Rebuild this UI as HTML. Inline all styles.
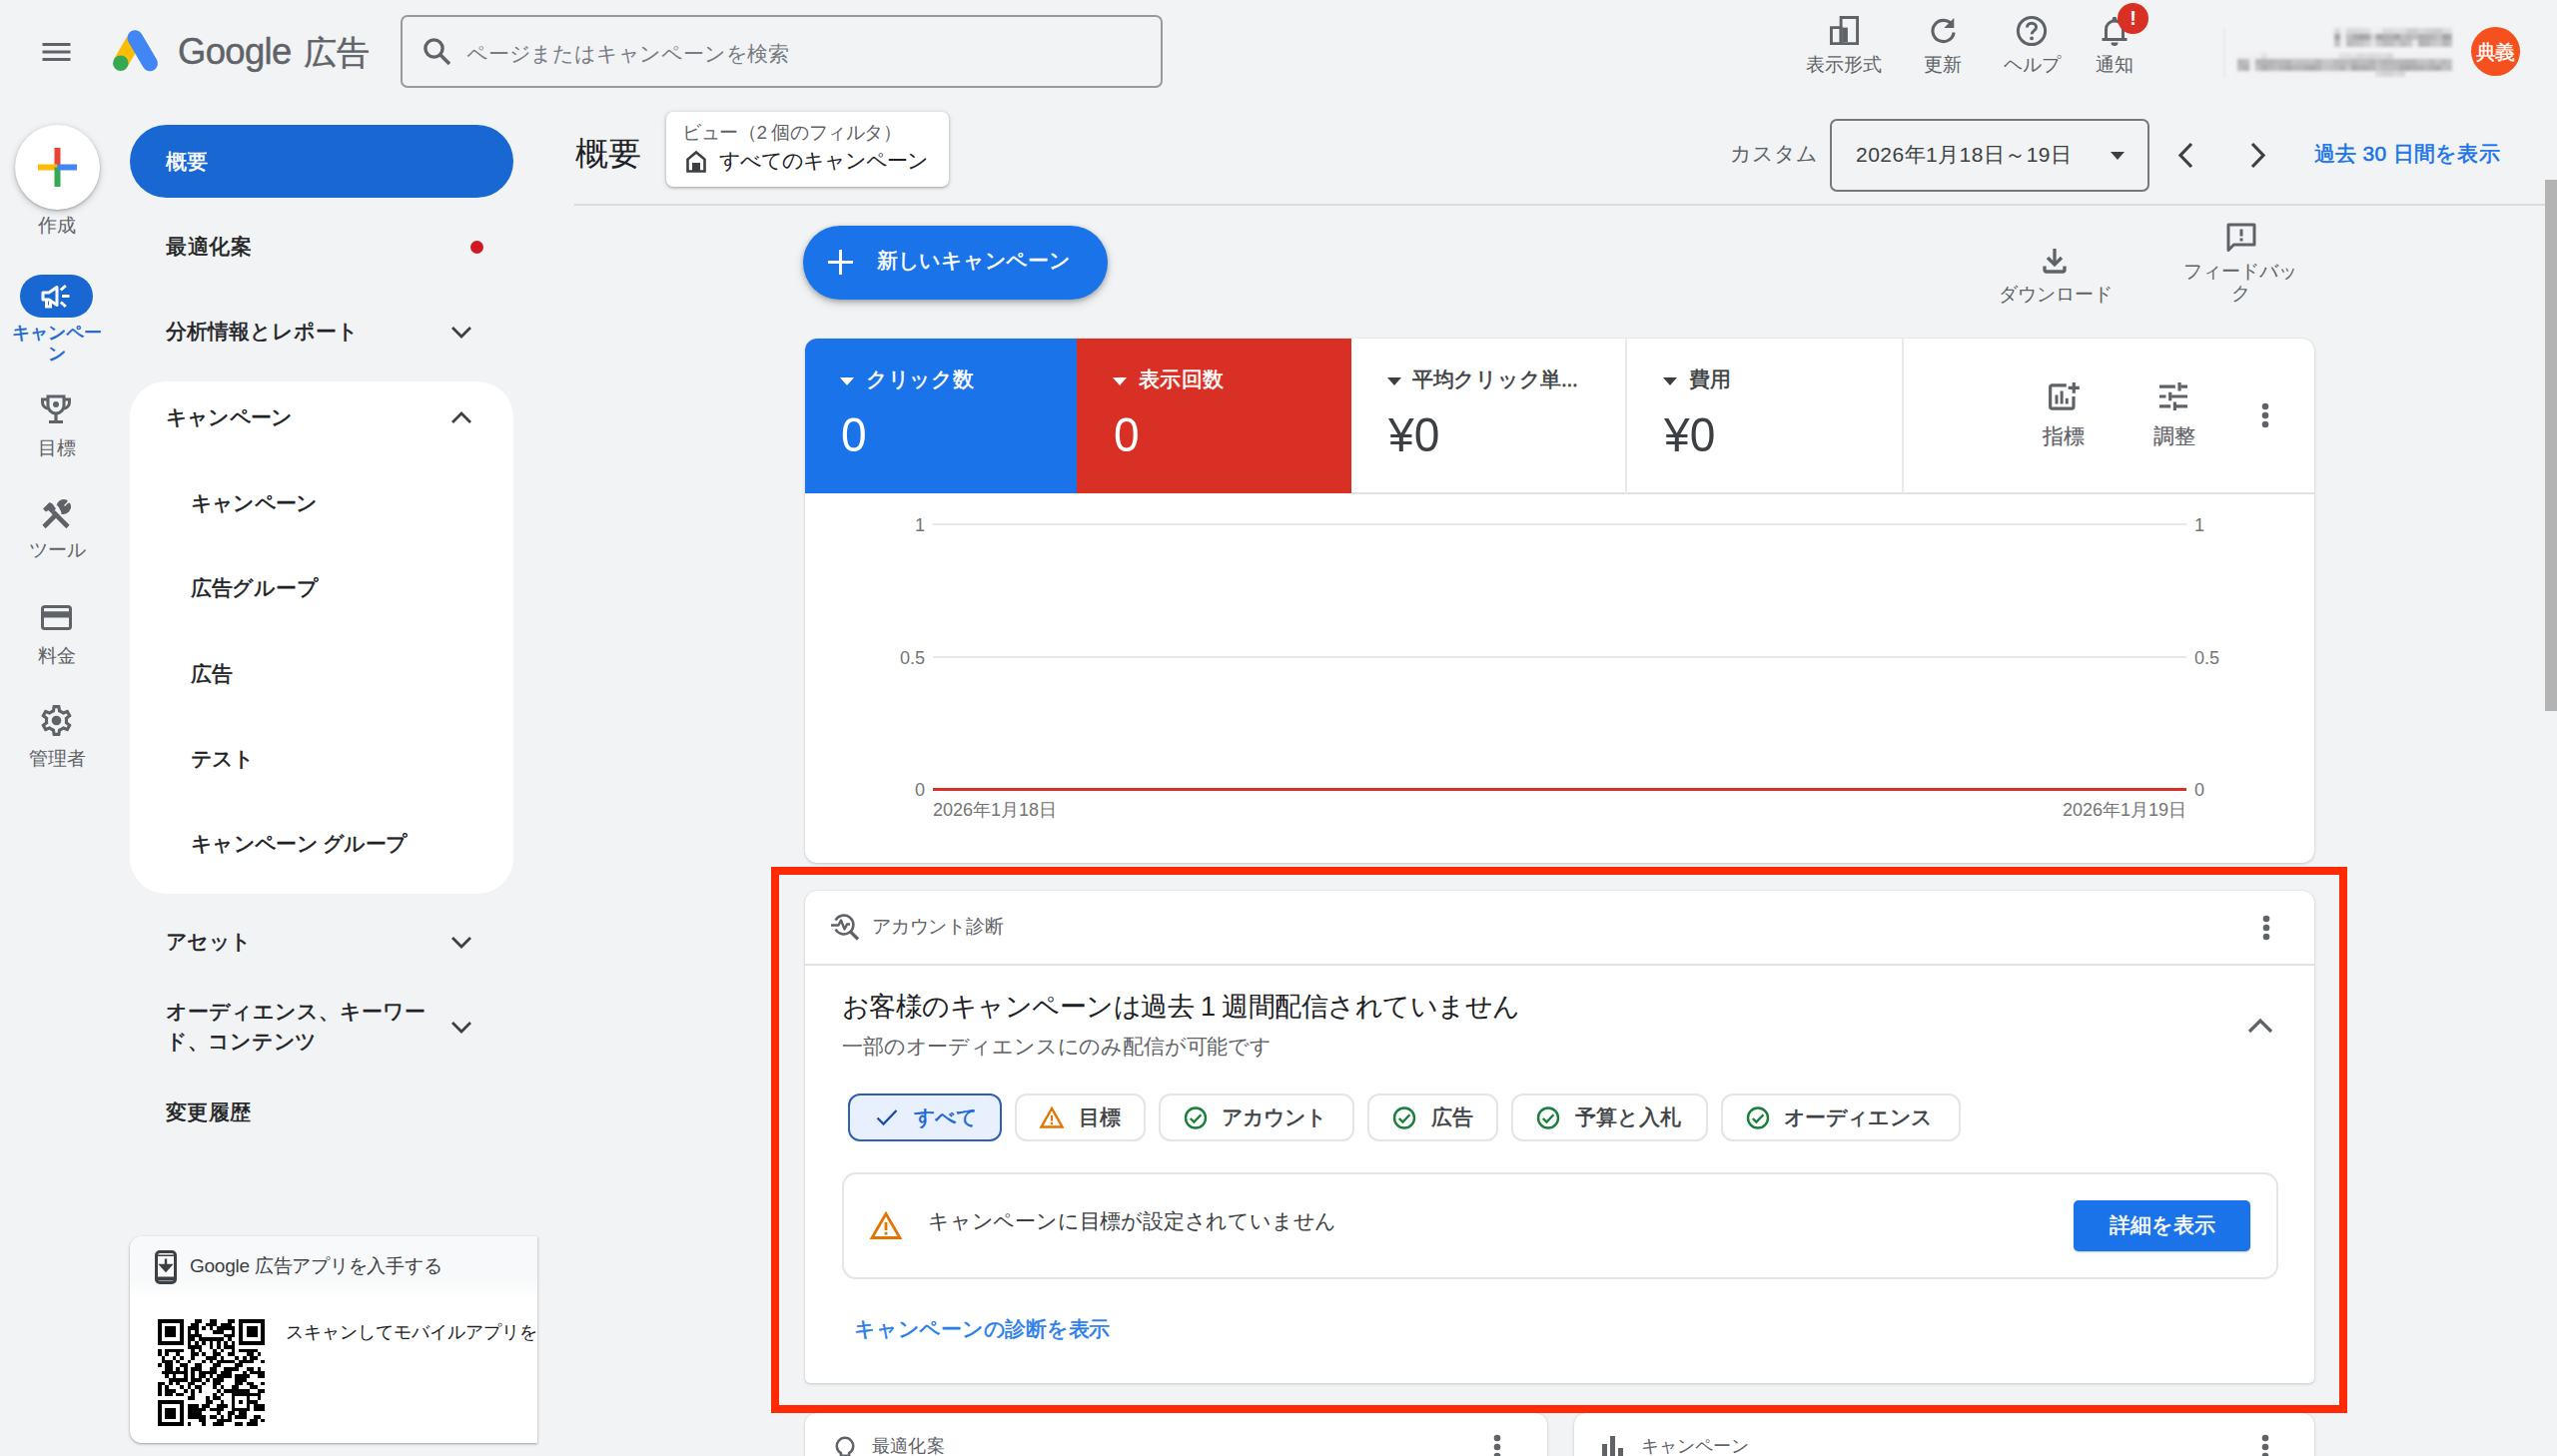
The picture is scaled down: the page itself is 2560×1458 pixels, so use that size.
<!DOCTYPE html>
<html lang="ja">
<head>
<meta charset="utf-8">
<title>Google 広告 - 概要</title>
<style>
*{box-sizing:border-box;margin:0;padding:0}
html,body{width:2560px;height:1458px;overflow:hidden;background:#f1f3f4}
body{font-family:"Liberation Sans",sans-serif;color:#202124;position:relative}
#app{position:absolute;left:0;top:0;width:2560px;height:1458px;overflow:hidden;background:#f1f3f4}
.a{position:absolute}
.t{position:absolute;white-space:nowrap;line-height:30px;height:30px;font-size:21px;color:#202124}
.c{text-align:center}
.g{color:#5f6368}
.s18{font-size:19px;line-height:26px;height:26px}
.b{font-weight:bold}
.m{-webkit-text-stroke:0.55px currentColor}
svg{position:absolute;overflow:visible}
.card{position:absolute;background:#fff;border-radius:12px;box-shadow:0 1px 3px rgba(60,64,67,.22),0 0 1px rgba(60,64,67,.2)}
.chip{position:absolute;top:1095px;height:48px;border:2px solid #e3e5e8;border-radius:12px;background:#fff}
.chip .t{top:7px;color:#3c4043}
.chip svg{position:absolute}
</style>
</head>
<body>
<div id="app">

<!-- ================= HEADER ================= -->
<svg class="a" style="left:42px;top:42px" width="30" height="22" viewBox="0 0 30 22"><path d="M0.500 2.500h28M0.500 10h28M0.500 17.500h28" stroke="#5f6368" stroke-width="3" fill="none"/></svg>

<!-- Google Ads logo -->
<svg class="a" style="left:111px;top:28px" width="50" height="46" viewBox="0 0 50 46">
  <path d="M9.800 35.200 22.500 13" stroke="#fbbc04" stroke-width="15.500" stroke-linecap="butt" fill="none"/>
  <path d="M24.200 10 39.200 35.500" stroke="#4285f4" stroke-width="15.500" stroke-linecap="round" fill="none"/>
  <circle cx="9.800" cy="35.200" r="7.750" fill="#34a853"/>
</svg>
<div class="t" style="left:178px;top:29px;font-size:36.400px;line-height:46px;height:46px;color:#5f6368;letter-spacing:-0.600px;-webkit-text-stroke:0.450px #5f6368">Google <span style="font-size:33px;letter-spacing:0;margin-left:3px">広告</span></div>

<!-- search -->
<div class="a" style="left:401px;top:15px;width:763px;height:73px;border:2px solid #969ba0;border-radius:7px;background:#f1f3f4"></div>
<svg class="a" style="left:423px;top:37px" width="30" height="30" viewBox="0 0 30 30"><circle cx="11.5" cy="11.5" r="8.6" stroke="#5f6368" stroke-width="3.4" fill="none"/><path d="M18 18l9 9" stroke="#5f6368" stroke-width="3.6" stroke-linecap="butt"/></svg>
<div class="t g" style="left:467px;top:39px;color:#787d83;letter-spacing:-0.200px">ページまたはキャンペーンを検索</div>

<!-- header right icons -->
<svg class="a" style="left:1831px;top:15px" width="31" height="31" viewBox="0 0 30 32"><path d="M11.5 2.5h17v27h-17z" stroke="#5f6368" stroke-width="3" fill="none"/><path d="M1.5 13h10v16.5h-10z" stroke="#5f6368" stroke-width="3" fill="none"/><path d="M13 13h5.5v15H13z" fill="#5f6368"/></svg>
<div class="t g s18 c" style="left:1786px;top:52px;width:120px">表示形式</div>

<svg class="a" style="left:1931px;top:16px" width="29" height="29" viewBox="0 0 30 30"><path d="M24.2 9.3A11 11 0 1 0 26 17" stroke="#5f6368" stroke-width="3.2" fill="none"/><path d="M26.2 2v10.4H15.8z" fill="#5f6368"/></svg>
<div class="t g s18 c" style="left:1885px;top:52px;width:120px">更新</div>

<svg class="a" style="left:2018px;top:15px" width="32" height="32" viewBox="0 0 32 32"><circle cx="16" cy="16" r="13.6" stroke="#5f6368" stroke-width="3" fill="none"/><path d="M11.4 12.6c0-2.6 2-4.4 4.6-4.4s4.6 1.7 4.6 4.1c0 3.2-4.4 3.6-4.4 7" stroke="#5f6368" stroke-width="2.9" fill="none"/><circle cx="16.1" cy="23.4" r="1.9" fill="#5f6368"/></svg>
<div class="t g s18 c" style="left:1974px;top:52px;width:120px">ヘルプ</div>

<svg class="a" style="left:2102px;top:15px" width="30" height="32" viewBox="0 0 30 32"><path d="M2.500 24.500h25M6.500 24v-9.500c0-4.800 3.500-8.500 8.500-8.500s8.500 3.700 8.500 8.500V24" stroke="#5f6368" stroke-width="3" fill="none" stroke-linejoin="round"/><circle cx="15" cy="4.200" r="2.400" fill="#5f6368"/><path d="M11.500 27.500h7a3.500 3.500 0 0 1-7 0z" fill="#5f6368"/></svg>
<div class="a" style="left:2120px;top:3px;width:31px;height:31px;border-radius:50%;background:#d93025;color:#fff;font-weight:bold;font-size:20px;line-height:31px;text-align:center">!</div>
<div class="t g s18 c" style="left:2057px;top:52px;width:120px">通知</div>

<!-- blurred account -->
<div class="a" style="left:2225px;top:28px;width:4px;height:50px;background:#eceef0"></div>
<div class="a" style="left:2337px;top:28px;width:118px;height:18px;filter:blur(1.800px)">
<div class="a" style="left:0;top:0px;width:118px;height:6.500px;background:linear-gradient(90deg,rgb(216,216,219) 0px 6px,rgb(238,238,241) 6px 12px,rgb(216,216,219) 12px 18px,rgb(216,216,219) 18px 24px,rgb(218,218,221) 24px 30px,rgb(220,220,223) 30px 36px,rgb(238,238,241) 36px 42px,rgb(238,238,241) 42px 48px,rgb(218,218,221) 48px 54px,rgb(217,217,220) 54px 60px,rgb(222,222,225) 60px 66px,rgb(221,221,224) 66px 72px,rgb(207,207,210) 72px 78px,rgb(205,205,208) 78px 84px,rgb(216,216,219) 84px 90px,rgb(211,211,214) 90px 96px,rgb(206,206,209) 96px 102px,rgb(204,204,207) 102px 108px,rgb(219,219,222) 108px 114px,rgb(222,222,225) 114px 120px)"></div>
<div class="a" style="left:0;top:6px;width:118px;height:6.500px;background:linear-gradient(90deg,rgb(166,166,169) 0px 6px,rgb(234,234,237) 6px 12px,rgb(192,192,195) 12px 18px,rgb(174,174,177) 18px 24px,rgb(164,164,167) 24px 30px,rgb(168,168,171) 30px 36px,rgb(212,212,215) 36px 42px,rgb(166,166,169) 42px 48px,rgb(176,176,179) 48px 54px,rgb(179,179,182) 54px 60px,rgb(165,165,168) 60px 66px,rgb(193,193,196) 66px 72px,rgb(184,184,187) 72px 78px,rgb(192,192,195) 78px 84px,rgb(176,176,179) 84px 90px,rgb(178,178,181) 90px 96px,rgb(182,182,185) 96px 102px,rgb(195,195,198) 102px 108px,rgb(164,164,167) 108px 114px,rgb(169,169,172) 114px 120px)"></div>
<div class="a" style="left:0;top:12px;width:118px;height:6.500px;background:linear-gradient(90deg,rgb(194,194,197) 0px 6px,rgb(238,238,241) 6px 12px,rgb(188,188,191) 12px 18px,rgb(193,193,196) 18px 24px,rgb(197,197,200) 24px 30px,rgb(206,206,209) 30px 36px,rgb(227,227,230) 36px 42px,rgb(202,202,205) 42px 48px,rgb(188,188,191) 48px 54px,rgb(190,190,193) 54px 60px,rgb(204,204,207) 60px 66px,rgb(187,187,190) 66px 72px,rgb(196,196,199) 72px 78px,rgb(234,234,237) 78px 84px,rgb(180,180,183) 84px 90px,rgb(182,182,185) 90px 96px,rgb(198,198,201) 96px 102px,rgb(204,204,207) 102px 108px,rgb(183,183,186) 108px 114px,rgb(192,192,195) 114px 120px)"></div>
</div>
<div class="a" style="left:2240px;top:53px;width:215px;height:24px;filter:blur(1.800px)">
<div class="a" style="left:0;top:0;width:215px;height:6.500px;background:linear-gradient(90deg,rgb(240,240,243) 0px 6px,rgb(240,240,243) 6px 12px,rgb(240,240,243) 12px 18px,rgb(240,240,243) 18px 24px,rgb(224,224,227) 24px 30px,rgb(240,240,243) 30px 36px,rgb(240,240,243) 36px 42px,rgb(240,240,243) 42px 48px,rgb(240,240,243) 48px 54px,rgb(240,240,243) 54px 60px,rgb(240,240,243) 60px 66px,rgb(240,240,243) 66px 72px,rgb(240,240,243) 72px 78px,rgb(240,240,243) 78px 84px,rgb(240,240,243) 84px 90px,rgb(240,240,243) 90px 96px,rgb(240,240,243) 96px 102px,rgb(224,224,227) 102px 108px,rgb(223,223,226) 108px 114px,rgb(226,226,229) 114px 120px,rgb(216,216,219) 120px 126px,rgb(220,220,223) 126px 132px,rgb(216,216,219) 132px 138px,rgb(220,220,223) 138px 144px,rgb(221,221,224) 144px 150px,rgb(214,214,217) 150px 156px,rgb(240,240,243) 156px 162px,rgb(240,240,243) 162px 168px,rgb(240,240,243) 168px 174px,rgb(240,240,243) 174px 180px,rgb(240,240,243) 180px 186px,rgb(240,240,243) 186px 192px,rgb(240,240,243) 192px 198px,rgb(240,240,243) 198px 204px,rgb(240,240,243) 204px 210px,rgb(240,240,243) 210px 216px)"></div>
<div class="a" style="left:0;top:6px;width:215px;height:6.500px;background:linear-gradient(90deg,rgb(183,183,186) 0px 6px,rgb(189,189,192) 6px 12px,rgb(237,237,240) 12px 18px,rgb(182,182,185) 18px 24px,rgb(180,180,183) 24px 30px,rgb(180,180,183) 30px 36px,rgb(186,186,189) 36px 42px,rgb(186,186,189) 42px 48px,rgb(181,181,184) 48px 54px,rgb(195,195,198) 54px 60px,rgb(192,192,195) 60px 66px,rgb(192,192,195) 66px 72px,rgb(193,193,196) 72px 78px,rgb(182,182,185) 78px 84px,rgb(198,198,201) 84px 90px,rgb(200,200,203) 90px 96px,rgb(186,186,189) 96px 102px,rgb(188,188,191) 102px 108px,rgb(190,190,193) 108px 114px,rgb(182,182,185) 114px 120px,rgb(189,189,192) 120px 126px,rgb(190,190,193) 126px 132px,rgb(180,180,183) 132px 138px,rgb(193,193,196) 138px 144px,rgb(183,183,186) 144px 150px,rgb(184,184,187) 150px 156px,rgb(187,187,190) 156px 162px,rgb(183,183,186) 162px 168px,rgb(180,180,183) 168px 174px,rgb(181,181,184) 174px 180px,rgb(194,194,197) 180px 186px,rgb(195,195,198) 186px 192px,rgb(185,185,188) 192px 198px,rgb(197,197,200) 198px 204px,rgb(186,186,189) 204px 210px,rgb(194,194,197) 210px 216px)"></div>
<div class="a" style="left:0;top:12px;width:215px;height:6.500px;background:linear-gradient(90deg,rgb(186,186,189) 0px 6px,rgb(176,176,179) 6px 12px,rgb(238,238,241) 12px 18px,rgb(194,194,197) 18px 24px,rgb(174,174,177) 24px 30px,rgb(183,183,186) 30px 36px,rgb(190,190,193) 36px 42px,rgb(182,182,185) 42px 48px,rgb(173,173,176) 48px 54px,rgb(182,182,185) 54px 60px,rgb(183,183,186) 60px 66px,rgb(176,176,179) 66px 72px,rgb(170,170,173) 72px 78px,rgb(178,178,181) 78px 84px,rgb(197,197,200) 84px 90px,rgb(195,195,198) 90px 96px,rgb(188,188,191) 96px 102px,rgb(179,179,182) 102px 108px,rgb(198,198,201) 108px 114px,rgb(170,170,173) 114px 120px,rgb(176,176,179) 120px 126px,rgb(175,175,178) 126px 132px,rgb(182,182,185) 132px 138px,rgb(197,197,200) 138px 144px,rgb(189,189,192) 144px 150px,rgb(190,190,193) 150px 156px,rgb(188,188,191) 156px 162px,rgb(173,173,176) 162px 168px,rgb(171,171,174) 168px 174px,rgb(174,174,177) 174px 180px,rgb(176,176,179) 180px 186px,rgb(184,184,187) 186px 192px,rgb(178,178,181) 192px 198px,rgb(170,170,173) 198px 204px,rgb(194,194,197) 204px 210px,rgb(189,189,192) 210px 216px)"></div>
<div class="a" style="left:0;top:18px;width:215px;height:6px;background:linear-gradient(90deg,rgb(241,241,244) 0px 6px,rgb(241,241,244) 6px 12px,rgb(241,241,244) 12px 18px,rgb(241,241,244) 18px 24px,rgb(241,241,244) 24px 30px,rgb(241,241,244) 30px 36px,rgb(241,241,244) 36px 42px,rgb(241,241,244) 42px 48px,rgb(241,241,244) 48px 54px,rgb(241,241,244) 54px 60px,rgb(241,241,244) 60px 66px,rgb(241,241,244) 66px 72px,rgb(241,241,244) 72px 78px,rgb(241,241,244) 78px 84px,rgb(241,241,244) 84px 90px,rgb(241,241,244) 90px 96px,rgb(241,241,244) 96px 102px,rgb(241,241,244) 102px 108px,rgb(241,241,244) 108px 114px,rgb(241,241,244) 114px 120px,rgb(241,241,244) 120px 126px,rgb(241,241,244) 126px 132px,rgb(241,241,244) 132px 138px,rgb(219,219,222) 138px 144px,rgb(211,211,214) 144px 150px,rgb(211,211,214) 150px 156px,rgb(219,219,222) 156px 162px,rgb(214,214,217) 162px 168px,rgb(241,241,244) 168px 174px,rgb(241,241,244) 174px 180px,rgb(241,241,244) 180px 186px,rgb(241,241,244) 186px 192px,rgb(241,241,244) 192px 198px,rgb(241,241,244) 198px 204px,rgb(241,241,244) 204px 210px,rgb(241,241,244) 210px 216px)"></div>
</div>
<div class="a" style="left:2474px;top:27px;width:49px;height:49px;border-radius:50%;background:#f4511e;color:#fff;font-size:19.500px;line-height:51px;text-align:center;-webkit-text-stroke:0.300px #fff;letter-spacing:-0.300px">典義</div>

<!-- ================= LEFT RAIL ================= -->
<div class="a" style="left:15px;top:125px;width:85px;height:85px;border-radius:50%;background:#fff;box-shadow:0 2px 6px rgba(60,64,67,.3),0 1px 2px rgba(60,64,67,.25)"></div>
<svg class="a" style="left:38px;top:148px" width="39" height="39" viewBox="0 0 39 39"><path d="M16.500 0h6v19.500h-6z" fill="#ea4335"/><path d="M0 16.500h19.500v6H0z" fill="#fbbc04"/><path d="M16.500 19.500h6V39h-6z" fill="#34a853"/><path d="M19.500 16.500H39v6H19.500z" fill="#4285f4"/></svg>
<div class="t g s18 c" style="left:0;top:213px;width:114px">作成</div>

<div class="a" style="left:20px;top:275px;width:73px;height:43px;border-radius:22px;background:#1967d2"></div>
<svg class="a" style="left:41px;top:283px" width="32" height="28" viewBox="0 0 32 28"><path d="M2 10h6l8-5.500v18L8 17H2z" stroke="#fff" stroke-width="3" fill="none" stroke-linejoin="round"/><path d="M5.500 17.500v6.500h4v-6" stroke="#fff" stroke-width="3" fill="none"/><path d="M21 13.500h7.500M19.800 7.500l5-4.500M19.800 19.500l5 4.500" stroke="#fff" stroke-width="3" fill="none"/></svg>
<div class="t s18 c m" style="left:0;top:323px;width:114px;color:#1967d2;line-height:21px;height:42px;white-space:normal;padding:0 9px;font-size:18px">キャンペーン</div>

<svg class="a" style="left:40px;top:394px" width="32" height="32" viewBox="0 0 32 32"><path d="M8 3h16v9a8 8 0 0 1-16 0z" stroke="#5f6368" stroke-width="3" fill="none"/><path d="M8 6H2.500v3a6 6 0 0 0 6 6M24 6h5.500v3a6 6 0 0 1-6 6" stroke="#5f6368" stroke-width="3" fill="none"/><path d="M16 20v7M9 28.500h14" stroke="#5f6368" stroke-width="3.200" fill="none"/><circle cx="16" cy="11" r="3" fill="#5f6368"/></svg>
<div class="t g s18 c" style="left:0;top:436px;width:114px">目標</div>

<svg class="a" style="left:40px;top:500px" width="32" height="32" viewBox="0 0 32 32"><path d="M4 27.500 17.500 14" stroke="#5f6368" stroke-width="4.600" fill="none"/><path d="M18 6.500a6 6 0 0 1 8-4.500l-4 4 3 3 4-4a6 6 0 0 1-7.500 8" stroke="#5f6368" stroke-width="3" fill="#5f6368" stroke-linejoin="round"/><path d="M28 27.500 13 12.500" stroke="#5f6368" stroke-width="4.600" fill="none"/><path d="M3 9.500l6.500-6.500 3 1.500 3.500 5-4.500 4.500-3-3-2.500 1.500z" fill="#5f6368"/></svg>
<div class="t g s18 c" style="left:0;top:538px;width:114px">ツール</div>

<svg class="a" style="left:41px;top:606px" width="31" height="25" viewBox="0 0 31 26" preserveAspectRatio="none"><rect x="1.500" y="1.500" width="28" height="23" rx="2.500" stroke="#5f6368" stroke-width="3" fill="none"/><path d="M1.500 6.500h28v6.500h-28z" fill="#5f6368"/></svg>
<div class="t g s18 c" style="left:0;top:644px;width:114px">料金</div>

<svg class="a" style="left:38px;top:703px" width="37" height="37" viewBox="0 0 24 24"><path d="M19.430 12.980c.040-.320.070-.640.070-.980s-.030-.660-.070-.980l2.110-1.650c.190-.150.240-.420.120-.640l-2-3.460c-.120-.220-.390-.300-.610-.220l-2.490 1c-.520-.400-1.080-.730-1.690-.980l-.380-2.650C14.460 2.180 14.250 2 14 2h-4c-.250 0-.460.180-.490.420l-.380 2.650c-.610.250-1.170.590-1.690.980l-2.490-1c-.230-.090-.490 0-.610.220l-2 3.460c-.130.220-.070.490.12.640l2.110 1.650c-.040.320-.070.650-.070.980s.030.660.070.980l-2.110 1.650c-.190.150-.240.420-.120.640l2 3.460c.120.220.390.300.610.220l2.490-1c.520.400 1.080.730 1.690.980l.380 2.650c.030.240.240.420.490.420h4c.250 0 .460-.180.490-.420l.380-2.650c.610-.250 1.170-.590 1.690-.980l2.490 1c.230.090.490 0 .610-.220l2-3.460c.120-.220.070-.490-.12-.640l-2.110-1.650zM17.450 11.270c.040.310.050.520.050.730 0 .210-.020.430-.050.730l-.140 1.130.89.700 1.080.840-.700 1.210-1.270-.510-1.040-.420-.900.680c-.430.320-.840.560-1.250.730l-1.060.430-.160 1.130-.200 1.350h-1.400l-.190-1.350-.160-1.130-1.060-.430c-.430-.180-.830-.410-1.230-.710l-.910-.700-1.060.430-1.270.510-.700-1.210 1.080-.840.890-.700-.140-1.130c-.030-.310-.050-.540-.050-.740s.020-.430.050-.730l.140-1.130-.890-.700-1.080-.840.700-1.210 1.270.510 1.040.420.900-.680c.430-.320.840-.560 1.250-.730l1.060-.430.160-1.130.200-1.350h1.390l.19 1.350.16 1.130 1.060.430c.430.180.830.410 1.230.710l.910.700 1.060-.430 1.270-.510.700 1.210-1.070.850-.89.700.14 1.130z" fill="#5f6368"/><circle cx="12" cy="12" r="3.100" fill="#5f6368"/></svg>
<div class="t g s18 c" style="left:0;top:747px;width:114px">管理者</div>

<!-- ================= SECOND NAV ================= -->
<div class="a" style="left:130px;top:125px;width:384px;height:73px;border-radius:37px;background:#1967d2"></div>
<div class="t m" style="left:166px;top:147px;color:#fff">概要</div>

<div class="t m" style="left:166px;top:232px;letter-spacing:0.700px">最適化案</div>
<div class="a" style="left:471px;top:241px;width:13px;height:13px;border-radius:50%;background:#d01820"></div>

<div class="t m" style="left:166px;top:317px">分析情報とレポート</div>
<svg class="a" style="left:451px;top:326px" width="22" height="14" viewBox="0 0 22 14"><path d="M2 2l9 9 9-9" stroke="#3c4043" stroke-width="2.800" fill="none"/></svg>

<div class="a" style="left:130px;top:382px;width:384px;height:513px;border-radius:36px;background:#fff"></div>
<div class="t m" style="left:166px;top:403px;letter-spacing:-0.800px">キャンペーン</div>
<svg class="a" style="left:451px;top:411px" width="22" height="14" viewBox="0 0 22 14"><path d="M2 12l9-9 9 9" stroke="#3c4043" stroke-width="2.800" fill="none"/></svg>
<div class="t m" style="left:191px;top:489px;letter-spacing:-0.800px">キャンペーン</div>
<div class="t m" style="left:191px;top:574px;letter-spacing:-0.300px">広告グループ</div>
<div class="t m" style="left:191px;top:660px">広告</div>
<div class="t m" style="left:191px;top:745px;letter-spacing:-1.200px">テスト</div>
<div class="t m" style="left:191px;top:830px;letter-spacing:-0.670px">キャンペーン グループ</div>

<div class="t m" style="left:166px;top:928px;letter-spacing:-0.600px">アセット</div>
<svg class="a" style="left:451px;top:937px" width="22" height="14" viewBox="0 0 22 14"><path d="M2 2l9 9 9-9" stroke="#3c4043" stroke-width="2.800" fill="none"/></svg>
<div class="t m" style="left:166px;top:998px">オーディエンス、キーワー</div>
<div class="t m" style="left:166px;top:1028px;letter-spacing:-0.300px">ド、コンテンツ</div>
<svg class="a" style="left:451px;top:1022px" width="22" height="14" viewBox="0 0 22 14"><path d="M2 2l9 9 9-9" stroke="#3c4043" stroke-width="2.800" fill="none"/></svg>
<div class="t m" style="left:166px;top:1099px;letter-spacing:0.300px">変更履歴</div>

<!-- app promo card -->
<div class="a" style="left:130px;top:1238px;width:408px;height:207px;overflow:hidden;border-radius:12px 0 0 12px;background:#fff;box-shadow:0 1px 3px rgba(60,64,67,.3),0 1px 2px rgba(60,64,67,.2)">
  <div class="a" style="left:0;top:0;width:409px;height:62px;background:linear-gradient(#f8f9fa 70%,#fff)"></div>
</div>
<svg class="a" style="left:155px;top:1252px" width="22" height="34" viewBox="0 0 22 34"><rect x="1.500" y="1.500" width="19" height="31" rx="3.500" stroke="#3c4043" stroke-width="3" fill="none"/><path d="M1.500 4.500h19v1.500h-19zM1.500 26.500h19v4h-19z" fill="#3c4043"/><path d="M11 8.500v11M6 15l5 5.500 5-5.500z" stroke="#3c4043" stroke-width="2.400" fill="#3c4043"/></svg>
<div class="t s18" style="left:190px;top:1255px;color:#3c4043;font-size:19px;letter-spacing:-0.250px">Google 広告アプリを入手する</div>
<div class="t s18" style="left:286px;top:1321px;color:#202124;width:252px;overflow:hidden;font-size:18px">スキャンしてモバイルアプリを</div>
<svg class="a" style="left:157.500px;top:1320.500px" width="107" height="107" viewBox="0 0 29 29" shape-rendering="crispEdges"><path d="M0 0h7v1h-7zM10 0h2v1h-2zM14 0h2v1h-2zM19 0h2v1h-2zM22 0h7v1h-7zM0 1h1v1h-1zM6 1h1v1h-1zM9 1h2v1h-2zM13 1h3v1h-3zM17 1h3v1h-3zM22 1h1v1h-1zM28 1h1v1h-1zM0 2h1v1h-1zM2 2h3v1h-3zM6 2h1v1h-1zM8 2h3v1h-3zM12 2h1v1h-1zM14 2h1v1h-1zM16 2h5v1h-5zM22 2h1v1h-1zM24 2h3v1h-3zM28 2h1v1h-1zM0 3h1v1h-1zM2 3h3v1h-3zM6 3h1v1h-1zM8 3h1v1h-1zM10 3h1v1h-1zM15 3h3v1h-3zM20 3h1v1h-1zM22 3h1v1h-1zM24 3h3v1h-3zM28 3h1v1h-1zM0 4h1v1h-1zM2 4h3v1h-3zM6 4h1v1h-1zM8 4h4v1h-4zM18 4h3v1h-3zM22 4h1v1h-1zM24 4h3v1h-3zM28 4h1v1h-1zM0 5h1v1h-1zM6 5h1v1h-1zM8 5h2v1h-2zM11 5h7v1h-7zM19 5h1v1h-1zM22 5h1v1h-1zM28 5h1v1h-1zM0 6h7v1h-7zM8 6h1v1h-1zM10 6h1v1h-1zM12 6h1v1h-1zM14 6h1v1h-1zM16 6h1v1h-1zM18 6h1v1h-1zM20 6h1v1h-1zM22 6h7v1h-7zM8 7h4v1h-4zM14 7h1v1h-1zM16 7h1v1h-1zM18 7h3v1h-3zM0 8h1v1h-1zM2 8h5v1h-5zM9 8h1v1h-1zM11 8h1v1h-1zM15 8h1v1h-1zM17 8h1v1h-1zM20 8h1v1h-1zM22 8h5v1h-5zM0 9h1v1h-1zM2 9h1v1h-1zM5 9h1v1h-1zM9 9h2v1h-2zM12 9h1v1h-1zM15 9h2v1h-2zM19 9h2v1h-2zM24 9h2v1h-2zM27 9h1v1h-1zM1 10h1v1h-1zM4 10h1v1h-1zM6 10h1v1h-1zM9 10h1v1h-1zM13 10h3v1h-3zM17 10h1v1h-1zM21 10h1v1h-1zM23 10h1v1h-1zM25 10h2v1h-2zM1 11h3v1h-3zM5 11h1v1h-1zM8 11h1v1h-1zM12 11h1v1h-1zM14 11h1v1h-1zM16 11h5v1h-5zM22 11h4v1h-4zM28 11h1v1h-1zM0 12h1v1h-1zM2 12h2v1h-2zM6 12h2v1h-2zM10 12h2v1h-2zM15 12h2v1h-2zM21 12h2v1h-2zM2 13h2v1h-2zM5 13h1v1h-1zM7 13h1v1h-1zM9 13h3v1h-3zM14 13h2v1h-2zM18 13h4v1h-4zM24 13h2v1h-2zM27 13h1v1h-1zM1 14h7v1h-7zM9 14h1v1h-1zM11 14h5v1h-5zM17 14h3v1h-3zM23 14h1v1h-1zM25 14h4v1h-4zM2 15h1v1h-1zM4 15h1v1h-1zM7 15h1v1h-1zM9 15h1v1h-1zM11 15h2v1h-2zM14 15h1v1h-1zM16 15h4v1h-4zM21 15h4v1h-4zM27 15h2v1h-2zM3 16h5v1h-5zM9 16h3v1h-3zM13 16h1v1h-1zM15 16h3v1h-3zM21 16h3v1h-3zM0 17h2v1h-2zM3 17h1v1h-1zM5 17h1v1h-1zM8 17h2v1h-2zM12 17h1v1h-1zM15 17h2v1h-2zM21 17h2v1h-2zM24 17h2v1h-2zM28 17h1v1h-1zM0 18h1v1h-1zM2 18h1v1h-1zM6 18h1v1h-1zM8 18h1v1h-1zM10 18h2v1h-2zM15 18h1v1h-1zM17 18h1v1h-1zM20 18h2v1h-2zM25 18h2v1h-2zM0 19h1v1h-1zM2 19h3v1h-3zM7 19h1v1h-1zM9 19h1v1h-1zM11 19h1v1h-1zM16 19h1v1h-1zM18 19h7v1h-7zM27 19h2v1h-2zM0 20h1v1h-1zM2 20h2v1h-2zM5 20h2v1h-2zM9 20h1v1h-1zM15 20h1v1h-1zM17 20h1v1h-1zM20 20h8v1h-8zM8 21h2v1h-2zM13 21h1v1h-1zM15 21h2v1h-2zM20 21h1v1h-1zM24 21h1v1h-1zM27 21h1v1h-1zM0 22h7v1h-7zM13 22h2v1h-2zM17 22h1v1h-1zM20 22h1v1h-1zM22 22h1v1h-1zM24 22h3v1h-3zM0 23h1v1h-1zM6 23h1v1h-1zM8 23h3v1h-3zM12 23h2v1h-2zM16 23h3v1h-3zM20 23h1v1h-1zM24 23h1v1h-1zM26 23h3v1h-3zM0 24h1v1h-1zM2 24h3v1h-3zM6 24h1v1h-1zM8 24h5v1h-5zM14 24h4v1h-4zM20 24h5v1h-5zM26 24h3v1h-3zM0 25h1v1h-1zM2 25h3v1h-3zM6 25h1v1h-1zM8 25h4v1h-4zM16 25h1v1h-1zM19 25h2v1h-2zM22 25h2v1h-2zM0 26h1v1h-1zM2 26h3v1h-3zM6 26h1v1h-1zM8 26h5v1h-5zM14 26h2v1h-2zM17 26h1v1h-1zM19 26h1v1h-1zM21 26h3v1h-3zM26 26h2v1h-2zM0 27h1v1h-1zM6 27h1v1h-1zM11 27h2v1h-2zM16 27h4v1h-4zM25 27h2v1h-2zM28 27h1v1h-1zM0 28h7v1h-7zM8 28h1v1h-1zM12 28h1v1h-1zM15 28h3v1h-3zM21 28h2v1h-2zM24 28h3v1h-3z" fill="#000"/></svg>

<!-- ================= MAIN HEADER ROW ================= -->
<div class="t" style="left:576px;top:132px;font-size:33px;line-height:44px;height:44px;color:#202124">概要</div>
<div class="a" style="left:667px;top:112px;width:283px;height:75px;border-radius:7px;background:#fff;box-shadow:0 1px 4px rgba(60,64,67,.32),0 1px 2px rgba(60,64,67,.2)"></div>
<div class="t g s18" style="left:683px;top:120px;font-size:19px;letter-spacing:-0.400px">ビュー（2 個のフィルタ）</div>
<svg class="a" style="left:686px;top:150px" width="22" height="23" viewBox="0 0 22 23"><path d="M2.500 21.500V9.500L11 2.500l8.500 7v12z" stroke="#3c4043" stroke-width="2.600" fill="none"/><path d="M7 13h8v9H7z" fill="#3c4043"/></svg>
<div class="t" style="left:720px;top:146px;color:#202124;letter-spacing:-1px">すべてのキャンペーン</div>

<div class="a" style="left:575px;top:204px;width:1973px;height:2px;background:#dadce0"></div>

<div class="t g" style="left:1732px;top:139px">カスタム</div>
<div class="a" style="left:1832px;top:119px;width:320px;height:73px;border:2px solid #74797f;border-radius:7px"></div>
<div class="t" style="left:1858px;top:140px;color:#3c4043;letter-spacing:0.450px">2026年1月18日～19日</div>
<svg class="a" style="left:2113px;top:152px" width="14" height="8" viewBox="0 0 16 9"><path d="M0 0h16L8 9z" fill="#3c4043"/></svg>
<svg class="a" style="left:2180px;top:142px" width="16" height="27" viewBox="0 0 16 27"><path d="M14 2 3 13.500 14 25" stroke="#3c4043" stroke-width="3.200" fill="none"/></svg>
<svg class="a" style="left:2253px;top:142px" width="16" height="27" viewBox="0 0 16 27"><path d="M2 2l11 11.500L2 25" stroke="#3c4043" stroke-width="3.200" fill="none"/></svg>
<div class="t m" style="left:2317px;top:139px;color:#1a73e8;letter-spacing:0.250px">過去 30 日間を表示</div>

<!-- scrollbar -->
<div class="a" style="left:2548px;top:180px;width:12px;height:532px;background:#b3b3b3"></div>

<!-- ================= ACTION ROW ================= -->
<div class="a" style="left:804px;top:226px;width:305px;height:74px;border-radius:37px;background:#1a73e8;box-shadow:0 2px 5px rgba(60,64,67,.35),0 4px 10px rgba(60,64,67,.18)"></div>
<svg class="a" style="left:829px;top:250px" width="25" height="25" viewBox="0 0 25 25"><path d="M12.500 0v25M0 12.500h25" stroke="#fff" stroke-width="3" fill="none"/></svg>
<div class="t m" style="left:878px;top:246px;color:#fff;letter-spacing:-0.300px">新しいキャンペーン</div>

<svg class="a" style="left:2045px;top:248px" width="24" height="26" viewBox="0 0 24 26"><path d="M12 1v15M5 10l7 7 7-7" stroke="#5f6368" stroke-width="3.300" fill="none"/><path d="M2 18.500v3.500a2 2 0 0 0 2 2h16a2 2 0 0 0 2-2v-3.500" stroke="#5f6368" stroke-width="3.300" fill="none"/></svg>
<div class="t g s18 c" style="left:1978px;top:282px;width:160px">ダウンロード</div>

<svg class="a" style="left:2229px;top:223px" width="30" height="30" viewBox="0 0 30 30"><path d="M2 27.500V2h26v20H7.500z" stroke="#5f6368" stroke-width="3" fill="none" stroke-linejoin="round"/><path d="M13.500 6.500h3v7h-3zM13.500 15.500h3v3h-3z" fill="#5f6368"/></svg>
<div class="t g s18 c" style="left:2163px;top:259px;width:160px">フィードバッ</div>
<div class="t g s18 c" style="left:2163px;top:281px;width:160px">ク</div>

<!-- ================= SCORECARD + CHART ================= -->
<div class="card" style="left:806px;top:339px;width:1511px;height:525px;overflow:hidden"><div class="a" style="left:-1px;top:0;width:1512px;height:525px">
  <div class="a" style="left:0;top:0;width:273px;height:155px;background:#1a73e8"></div>
  <div class="a" style="left:273px;top:0;width:275px;height:155px;background:#d93025"></div>
  <div class="a" style="left:548px;top:154px;width:964px;height:2px;background:#e0e2e5"></div>
  <div class="a" style="left:822px;top:0;width:2px;height:155px;background:#e8eaed"></div>
  <div class="a" style="left:1099px;top:0;width:2px;height:155px;background:#e8eaed"></div>

  <svg class="a" style="left:36px;top:39px" width="14" height="8" viewBox="0 0 14 8"><path d="M0 0h14L7 8z" fill="#fff"/></svg>
  <div class="t m" style="left:62px;top:26px;color:#fff;letter-spacing:-0.300px">クリック数</div>
  <div class="t" style="left:37px;top:69px;font-size:48px;line-height:56px;height:56px;transform:scaleX(.96);transform-origin:left center;color:#fff">0</div>

  <svg class="a" style="left:309px;top:39px" width="14" height="8" viewBox="0 0 14 8"><path d="M0 0h14L7 8z" fill="#fff"/></svg>
  <div class="t m" style="left:335px;top:26px;color:#fff;letter-spacing:0.300px">表示回数</div>
  <div class="t" style="left:310px;top:69px;font-size:48px;line-height:56px;height:56px;transform:scaleX(.96);transform-origin:left center;color:#fff">0</div>

  <svg class="a" style="left:584px;top:39px" width="14" height="8" viewBox="0 0 14 8"><path d="M0 0h14L7 8z" fill="#3c4043"/></svg>
  <div class="t m" style="left:609px;top:26px;color:#3c4043;letter-spacing:-0.300px">平均クリック単...</div>
  <div class="t" style="left:585px;top:69px;font-size:48px;line-height:56px;height:56px;transform:scaleX(.96);transform-origin:left center;color:#3c4043">¥0</div>

  <svg class="a" style="left:860px;top:39px" width="14" height="8" viewBox="0 0 14 8"><path d="M0 0h14L7 8z" fill="#3c4043"/></svg>
  <div class="t m" style="left:886px;top:26px;color:#3c4043">費用</div>
  <div class="t" style="left:861px;top:69px;font-size:48px;line-height:56px;height:56px;transform:scaleX(.96);transform-origin:left center;color:#3c4043">¥0</div>

  <!-- 指標 -->
  <svg class="a" style="left:1245px;top:44px" width="32" height="28" viewBox="0 0 32 30"><path d="M19 3H3.700a2 2 0 0 0-2 2v21a2 2 0 0 0 2 2h21a2 2 0 0 0 2-2V15" stroke="#5f6368" stroke-width="3.400" fill="none"/><path d="M8.500 13.500v9.500M14 9v14M19.500 17v6" stroke="#5f6368" stroke-width="3.200" fill="none"/><path d="M27 0v11.500M21 5.700h12" stroke="#5f6368" stroke-width="3.400" fill="none"/></svg>
  <div class="t g c" style="left:1201px;top:83px;width:120px;-webkit-text-stroke:0.250px #5f6368">指標</div>
  <!-- 調整 -->
  <svg class="a" style="left:1357px;top:44px" width="28" height="28" viewBox="0 0 30 30"><path d="M0 4.500h17M23 4.500h7M0 15h7M13 15h17M0 25.500h12M18 25.500h12" stroke="#5f6368" stroke-width="3.400" fill="none"/><path d="M21.500 0v9M11.500 10.500v9M16.500 21v9" stroke="#5f6368" stroke-width="3.400" fill="none"/></svg>
  <div class="t g c" style="left:1312px;top:83px;width:120px;-webkit-text-stroke:0.250px #5f6368">調整</div>
  <!-- more -->
  <svg class="a" style="left:1459px;top:64px" width="8" height="26" viewBox="0 0 8 26"><circle cx="4" cy="4" r="3.300" fill="#5f6368"/><circle cx="4" cy="13" r="3.300" fill="#5f6368"/><circle cx="4" cy="22" r="3.300" fill="#5f6368"/></svg>

  <!-- chart -->
  <div class="a" style="left:129px;top:185px;width:1255px;height:2px;background:#e6e8ea"></div>
  <div class="a" style="left:129px;top:318px;width:1255px;height:2px;background:#e6e8ea"></div>
  <div class="a" style="left:129px;top:450px;width:1255px;height:3px;background:#d93025"></div>
  <div class="t s18" style="left:62px;top:174px;width:59px;text-align:right;color:#757575;font-size:18px">1</div>
  <div class="t s18" style="left:62px;top:307px;width:59px;text-align:right;color:#757575;font-size:18px">0.5</div>
  <div class="t s18" style="left:62px;top:439px;width:59px;text-align:right;color:#757575;font-size:18px">0</div>
  <div class="t s18" style="left:1392px;top:174px;color:#757575;font-size:18px">1</div>
  <div class="t s18" style="left:1392px;top:307px;color:#757575;font-size:18px">0.5</div>
  <div class="t s18" style="left:1392px;top:439px;color:#757575;font-size:18px">0</div>
  <div class="t s18" style="left:129px;top:459px;color:#757575;font-size:18px">2026年1月18日</div>
  <div class="t s18" style="left:1184px;top:459px;width:200px;text-align:right;color:#757575;font-size:18px">2026年1月19日</div>
</div></div>

<!-- ================= ACCOUNT DIAGNOSTICS ================= -->
<div class="card" style="left:806px;top:892px;width:1511px;height:493px;border-radius:12px 12px 5px 5px"></div>
<svg class="a" style="left:831px;top:913px" width="30" height="30" viewBox="0 0 30 30"><path d="M5.500 8.500a9.500 9.500 0 1 1 0 9" stroke="#5f6368" stroke-width="2.600" fill="none"/><path d="M1 13.500h7.500l2.500-5 3.500 9 2.500-5h3" stroke="#5f6368" stroke-width="2.400" fill="none" stroke-linejoin="round"/><path d="M20.500 20l7.500 7.500" stroke="#5f6368" stroke-width="3.200" fill="none"/></svg>
<div class="t g" style="left:873px;top:913px;font-size:19px;letter-spacing:-0.200px">アカウント診断</div>
<svg class="a" style="left:2265px;top:916px" width="8" height="26" viewBox="0 0 8 26"><circle cx="4" cy="4" r="3.300" fill="#5f6368"/><circle cx="4" cy="13" r="3.300" fill="#5f6368"/><circle cx="4" cy="22" r="3.300" fill="#5f6368"/></svg>
<div class="a" style="left:806px;top:965px;width:1511px;height:2px;background:#e0e2e5"></div>

<div class="t" style="left:843px;top:989px;font-size:27px;letter-spacing:-0.540px;line-height:38px;height:38px;color:#202124">お客様のキャンペーンは過去 1 週間配信されていません</div>
<div class="t" style="left:843px;top:1033px;color:#5f6368;letter-spacing:-0.150px">一部のオーディエンスにのみ配信が可能です</div>
<svg class="a" style="left:2250px;top:1019px" width="26" height="16" viewBox="0 0 26 16"><path d="M2 14 13 3l11 11" stroke="#5f6368" stroke-width="3.200" fill="none"/></svg>

<!-- chips -->
<div class="chip" style="left:849px;width:154px;background:#e8f0fe;border-color:#2f5fb3"><svg style="left:26px;top:13px" width="22" height="18" viewBox="0 0 22 18"><path d="M1.500 9.500 7.500 15.500 20.500 2" stroke="#174ea6" stroke-width="2.300" fill="none"/></svg><div class="t m" style="left:64px;color:#1967d2;letter-spacing:-1px">すべて</div></div>
<div class="chip" style="left:1016px;width:131px"><svg style="left:22px;top:10px" width="26" height="24" viewBox="0 0 26 24"><path d="M13 3 2.500 21.500h21z" stroke="#e37400" stroke-width="2.400" fill="none" stroke-linejoin="miter"/><path d="M11.900 10h2.200v5.500h-2.200zM11.900 17h2.200v2.200h-2.200z" fill="#e37400"/></svg><div class="t m" style="left:62px">目標</div></div>
<div class="chip" style="left:1160px;width:196px"><svg style="left:23px;top:9px" width="26" height="26" viewBox="0 0 26 26"><circle cx="12" cy="13.500" r="10" stroke="#188038" stroke-width="2.400" fill="none"/><path d="M6.800 14l3.600 3.600 7-7.400" stroke="#188038" stroke-width="2.400" fill="none"/></svg><div class="t m" style="left:61px;letter-spacing:-1px">アカウント</div></div>
<div class="chip" style="left:1369px;width:131px"><svg style="left:23px;top:9px" width="26" height="26" viewBox="0 0 26 26"><circle cx="12" cy="13.500" r="10" stroke="#188038" stroke-width="2.400" fill="none"/><path d="M6.800 14l3.600 3.600 7-7.400" stroke="#188038" stroke-width="2.400" fill="none"/></svg><div class="t m" style="left:62px">広告</div></div>
<div class="chip" style="left:1513px;width:197px"><svg style="left:23px;top:9px" width="26" height="26" viewBox="0 0 26 26"><circle cx="12" cy="13.500" r="10" stroke="#188038" stroke-width="2.400" fill="none"/><path d="M6.800 14l3.600 3.600 7-7.400" stroke="#188038" stroke-width="2.400" fill="none"/></svg><div class="t m" style="left:62px">予算と入札</div></div>
<div class="chip" style="left:1723px;width:240px"><svg style="left:23px;top:9px" width="26" height="26" viewBox="0 0 26 26"><circle cx="12" cy="13.500" r="10" stroke="#188038" stroke-width="2.400" fill="none"/><path d="M6.800 14l3.600 3.600 7-7.400" stroke="#188038" stroke-width="2.400" fill="none"/></svg><div class="t m" style="left:61px;letter-spacing:-0.700px">オーディエンス</div></div>

<!-- alert -->
<div class="a" style="left:843px;top:1174px;width:1438px;height:107px;border:2px solid #e3e5e8;border-radius:14px;background:#fff"></div>
<svg class="a" style="left:870px;top:1212px" width="34" height="30" viewBox="0 0 34 30"><path d="M17 3.500 3 27.500h28z" stroke="#e37400" stroke-width="2.800" fill="none"/><path d="M15.600 12h2.800v8h-2.800zM15.600 21.800h2.800v2.800h-2.800z" fill="#e37400"/></svg>
<div class="t" style="left:929px;top:1208px;color:#3c4043;letter-spacing:-0.200px">キャンペーンに目標が設定されていません</div>
<div class="a" style="left:2076px;top:1202px;width:177px;height:51px;border-radius:5px;background:#1a73e8;box-shadow:0 1px 2px rgba(60,64,67,.3)"></div>
<div class="t m c" style="left:2076px;top:1212px;width:177px;color:#fff">詳細を表示</div>

<div class="t m" style="left:855px;top:1316px;color:#2b7de9;letter-spacing:-0.250px">キャンペーンの診断を表示</div>

<!-- ================= BOTTOM CARDS ================= -->
<div class="card" style="left:806px;top:1415px;width:743px;height:80px"></div>
<svg class="a" style="left:836px;top:1437px" width="20" height="28" viewBox="0 0 22 30"><path d="M6.500 19.500a9 9 0 1 1 9 0v3h-9z" stroke="#5f6368" stroke-width="2.800" fill="none"/><path d="M7 27h8" stroke="#5f6368" stroke-width="2.800"/></svg>
<div class="t g" style="left:873px;top:1433px;font-size:18px;letter-spacing:0.200px">最適化案</div>
<svg class="a" style="left:1495px;top:1436px" width="8" height="26" viewBox="0 0 8 26"><circle cx="4" cy="4" r="3.300" fill="#5f6368"/><circle cx="4" cy="13" r="3.300" fill="#5f6368"/><circle cx="4" cy="22" r="3.300" fill="#5f6368"/></svg>

<div class="card" style="left:1576px;top:1415px;width:741px;height:80px"></div>
<svg class="a" style="left:1604px;top:1438px" width="22" height="22" viewBox="0 0 22 22"><path d="M0 8h5v14H0zM8 0h5v22H8zM16 12h5v10h-5z" fill="#5f6368"/></svg>
<div class="t g" style="left:1643px;top:1433px;font-size:18px">キャンペーン</div>
<svg class="a" style="left:2264px;top:1436px" width="8" height="26" viewBox="0 0 8 26"><circle cx="4" cy="4" r="3.300" fill="#5f6368"/><circle cx="4" cy="13" r="3.300" fill="#5f6368"/><circle cx="4" cy="22" r="3.300" fill="#5f6368"/></svg>

<!-- red highlight annotation -->
<div class="a" style="left:772px;top:868px;width:1578px;height:547px;border:8px solid #ff2a04"></div>



</div>
</body>
</html>
